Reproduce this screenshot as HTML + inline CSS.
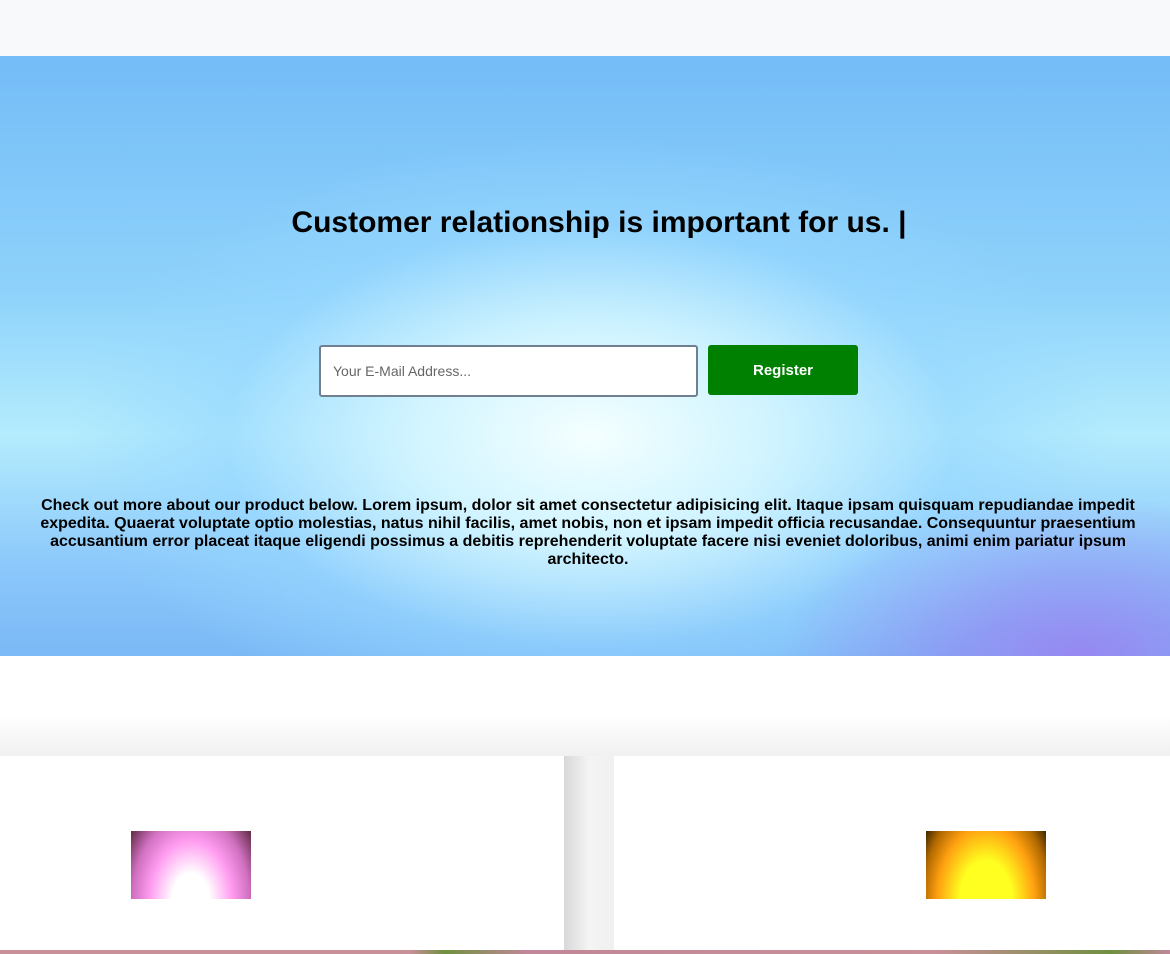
<!DOCTYPE html>
<html><head><meta charset="utf-8"><style>
body{margin:0;width:1170px;height:954px;overflow:hidden;background:#fff;font-family:"Liberation Sans",sans-serif;position:relative}
.top{position:absolute;left:0;top:0;width:1170px;height:56px;background:#f8f9fa}
.hero{position:absolute;left:0;top:56px;width:1170px;height:600px;overflow:hidden;
background:
radial-gradient(ellipse 300px 160px at 1080px 600px,rgba(160,120,240,.75),rgba(160,120,240,0) 100%),
radial-gradient(ellipse 520px 300px at 590px 380px,#f4ffff 0%,#d0f4ff 35%,rgba(150,215,255,.6) 70%,rgba(120,190,250,0) 100%),
linear-gradient(180deg,#74bcf7 0%,#8fd3fb 40%,#b4ecfd 63%,#8cc8fb 85%,#7ab8f6 100%)}
h1{position:absolute;top:150px;left:0;width:1198px;text-align:center;margin:0;font-size:30px;font-weight:bold;color:#000}
.inp{position:absolute;left:319px;top:289px;border:2px solid #708090;border-radius:3px;background:#fff;box-sizing:border-box;width:379px;height:52px;font-family:"Liberation Sans",sans-serif;font-size:14px;color:#666;padding:16px 12px;line-height:16px}
.btn{position:absolute;left:708px;top:289px;width:150px;height:50px;background:#008000;border-radius:3px;color:#fff;font-family:"Liberation Sans",sans-serif;font-weight:bold;font-size:15px;text-align:center;line-height:52px}
.desc{position:absolute;top:441px;left:35px;width:1106px;text-align:center;font-weight:bold;font-size:16px;line-height:18px;color:#000}
.gap{position:absolute;left:0;top:656px;width:1170px;height:298px;background:linear-gradient(180deg,#fff 0%,#fff 20%,#f0f0f0 34%,#eee 100%)}
.mid{position:absolute;left:564px;top:756px;width:50px;height:198px;background:linear-gradient(90deg,#d8d8d8,#f4f4f4 50%,#f0f0f0)}
.card{position:absolute;top:756px;height:194px;background:#fff}
.img1{position:absolute;left:131px;top:831px;width:120px;height:68px;background:radial-gradient(ellipse 75px 110px at 60px 70px,#fff 0%,#fff 25%,#ff9cf0 55%,#d070c0 78%,#6a3050 100%)}
.img2{position:absolute;left:926px;top:831px;width:120px;height:68px;background:radial-gradient(ellipse 75px 115px at 60px 70px,#ffff20 0%,#ffff20 35%,#ffa010 65%,#b06800 85%,#402800 100%)}
.strip{position:absolute;left:0;top:950px;width:1170px;height:4px;background:linear-gradient(90deg,#c89098 0 35%,#709040 38%,#c08898 45%,#c89098 80%,#709040 95%,#c08898)}
</style></head><body>
<div class="top"></div>
<div class="hero">
<h1>Customer relationship is important for us. |</h1>
<div class="inp">Your E-Mail Address...</div>
<div class="btn">Register</div>
<div class="desc">Check out more about our product below. Lorem ipsum, dolor sit amet consectetur adipisicing elit. Itaque ipsam quisquam repudiandae impedit expedita. Quaerat voluptate optio molestias, natus nihil facilis, amet nobis, non et ipsam impedit officia recusandae. Consequuntur praesentium accusantium error placeat itaque eligendi possimus a debitis reprehenderit voluptate facere nisi eveniet doloribus, animi enim pariatur ipsum architecto.</div>
</div>
<div class="gap"></div>
<div class="mid"></div>
<div class="card" style="left:0;width:564px"></div>
<div class="card" style="left:614px;width:556px"></div>
<div class="img1"></div>
<div class="img2"></div>
<div class="strip"></div>
</body></html>
